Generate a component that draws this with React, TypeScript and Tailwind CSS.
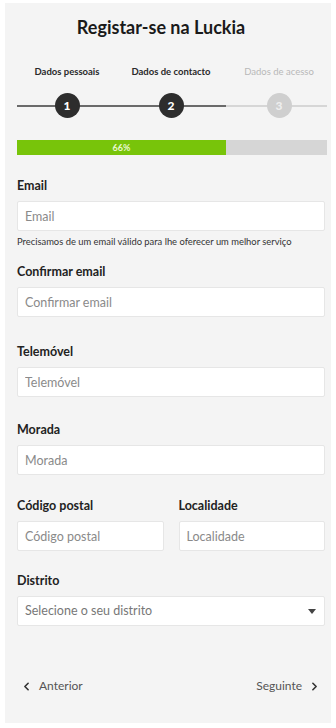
import { ChevronLeft, ChevronRight } from "lucide-react";

const font = { fontFamily: "Lato, 'Noto Sans', sans-serif" };

function Field({ label, placeholder }: { label: string; placeholder: string }) {
  return (
    <div className="flex flex-col">
      <label className="mb-[7px] text-[12.5px] font-bold leading-[16px] text-[#222]">{label}</label>
      <input
        placeholder={placeholder}
        className="h-[30px] w-full rounded-[2px] border border-[#e6e6e6] bg-white px-[7px] text-[12.5px] text-[#333] outline-none placeholder:text-[#8a8a8a]"
      />
    </div>
  );
}

function Step({ n, state }: { n: number; state: "done" | "active" | "todo" }) {
  const dark = state !== "todo";
  return (
    <div
      className={`relative flex h-[25px] w-[25px] items-center justify-center rounded-full text-[12px] font-black ${
        dark ? "bg-[#2d2d2d] text-white" : "bg-[#cfcfcf] text-[#eeeeee]"
      }`}
    >
      {n}
    </div>
  );
}

export default function App() {
  return (
    <div className="min-h-[728px] bg-white px-[5px] pt-[3px] pb-[5px]" style={font}>
      <div className="flex min-h-[720px] flex-col bg-[#f4f4f4] pl-[12px] pr-[4px]">
        <h1 className="pt-[12px] pr-[22px] text-center text-[18px] font-bold leading-[24px] text-[#1a1a1a]">
          Registar-se na Luckia
        </h1>

        {/* Steps */}
        <div className="mt-[26px] grid grid-cols-[100px_108px_108px] text-center text-[9.5px] font-bold leading-[14px]">
          <span className="text-[#2a2a2a]">Dados pessoais</span>
          <span className="text-[#2a2a2a]">Dados de contacto</span>
          <span className="font-normal text-[#b8b8b8]">Dados de acesso</span>
        </div>
        <div className="relative mt-[14px] grid h-[25px] grid-cols-[100px_108px_108px] justify-items-center">
          <div className="absolute left-0 top-[12px] h-[2px] w-[209px] bg-[#6a6a6a]" />
          <div className="absolute left-[209px] right-0 top-[12px] h-[2px] bg-[#d6d6d6]" />
          <Step n={1} state="done" />
          <Step n={2} state="active" />
          <Step n={3} state="todo" />
        </div>

        {/* Progress */}
        <div className="mt-[22px] flex h-[15px] bg-[#d6d6d6]">
          <div className="flex w-[209px] items-center justify-center bg-[#78c40a] text-[9px] font-bold text-[#e8f7d0]">
            66%
          </div>
        </div>

        <div className="mt-[23px] mr-[2px] flex flex-col">
          <Field label="Email" placeholder="Email" />
          <p className="mt-[4px] text-[9.4px] leading-[13px] text-[#333]">
            Precisamos de um email válido para lhe oferecer um melhor serviço
          </p>
        </div>

        <div className="mt-[16px] mr-[2px]">
          <Field label="Confirmar email" placeholder="Confirmar email" />
        </div>
        <div className="mt-[27px] mr-[2px]">
          <Field label="Telemóvel" placeholder="Telemóvel" />
        </div>
        <div className="mt-[25px] mr-[2px]">
          <Field label="Morada" placeholder="Morada" />
        </div>
        <div className="mt-[23px] mr-[2px] grid grid-cols-2 gap-[15px]">
          <Field label="Código postal" placeholder="Código postal" />
          <Field label="Localidade" placeholder="Localidade" />
        </div>

        <div className="mt-[22px] mr-[2px] flex flex-col">
          <label className="mb-[7px] text-[12.5px] font-bold leading-[16px] text-[#222]">Distrito</label>
          <div className="flex h-[30px] items-center justify-between rounded-[2px] border border-[#e6e6e6] bg-white px-[7px] text-[12.5px] text-[#777]">
            <span>Selecione o seu distrito</span>
            <span className="mr-[1px] h-0 w-0 border-x-[4px] border-t-[5px] border-x-transparent border-t-[#444]" />
          </div>
        </div>

        <div className="mt-[52px] flex h-[16px] items-center justify-between pl-[3px] pr-[6px] text-[12px] text-[#555]">
          <button className="flex items-center gap-[6px]">
            <ChevronLeft size={13} strokeWidth={3} className="text-[#333]" />
            Anterior
          </button>
          <button className="flex items-center gap-[6px]">
            Seguinte
            <ChevronRight size={13} strokeWidth={3} className="text-[#333]" />
          </button>
        </div>
      </div>
    </div>
  );
}
